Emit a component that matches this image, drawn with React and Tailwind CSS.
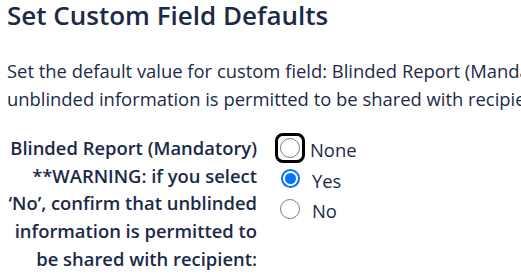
import React, { useState } from 'react';

const labelLines = [
  'Blinded Report (Mandatory)',
  '**WARNING: if you select',
  '\u2018No\u2019, confirm that unblinded',
  'information is permitted to',
  'be shared with recipient:',
];

const options = ['None', 'Yes', 'No'];

const Radio = ({ checked, focused }) => (
  <span className="relative mt-[2px] flex h-[20px] w-[20px] shrink-0 items-center justify-center">
    {checked ? (
      <span className="flex h-[19px] w-[19px] items-center justify-center rounded-full bg-[#0075ff]">
        <span className="flex h-[15px] w-[15px] items-center justify-center rounded-full bg-white">
          <span className="h-[11px] w-[11px] rounded-full bg-[#0075ff]"></span>
        </span>
      </span>
    ) : (
      <span className="h-[20px] w-[20px] rounded-full border-[1.5px] border-[#808080] bg-white"></span>
    )}
    {focused && (
      <span className="absolute -inset-[5px] rounded-[8px] border-[3px] border-black"></span>
    )}
  </span>
);

const App = () => {
  const [value, setValue] = useState('Yes');

  return (
    <div className="min-h-screen overflow-hidden bg-white pl-[7px] font-['Open_Sans',sans-serif] text-[#1b2a47]">
      <h4 className="text-[26px] font-semibold leading-[30px] whitespace-nowrap">
        Set Custom Field Defaults
      </h4>

      <p className="mt-[27px] text-[18.4px] leading-[27.6px] whitespace-nowrap">
        Set the default value for custom field: Blinded Report (Mandatory) **WARNING: if you select &lsquo;No&rsquo;, confirm that
        <br />
        unblinded information is permitted to be shared with recipient:
      </p>

      {/* Field row */}
      <div className="mt-[22px] flex gap-[23px]">
        <div className="w-[250px] shrink-0 text-right text-[18.4px] font-semibold leading-[27.6px]">
          {labelLines.map((line) => (
            <div key={line} className="whitespace-nowrap">{line}</div>
          ))}
        </div>

        <div className="pt-[2px]">
          {options.map((opt, i) => (
            <div
              key={opt}
              onClick={() => setValue(opt)}
              className="mb-[3px] flex cursor-pointer items-start text-[18.4px] leading-[27.6px]"
            >
              <Radio checked={value === opt} focused={i === 0} />
              <span className={i === 0 ? 'ml-[10px]' : 'ml-[12px]'}>{opt}</span>
            </div>
          ))}
        </div>
      </div>
    </div>
  );
};

export default App;
